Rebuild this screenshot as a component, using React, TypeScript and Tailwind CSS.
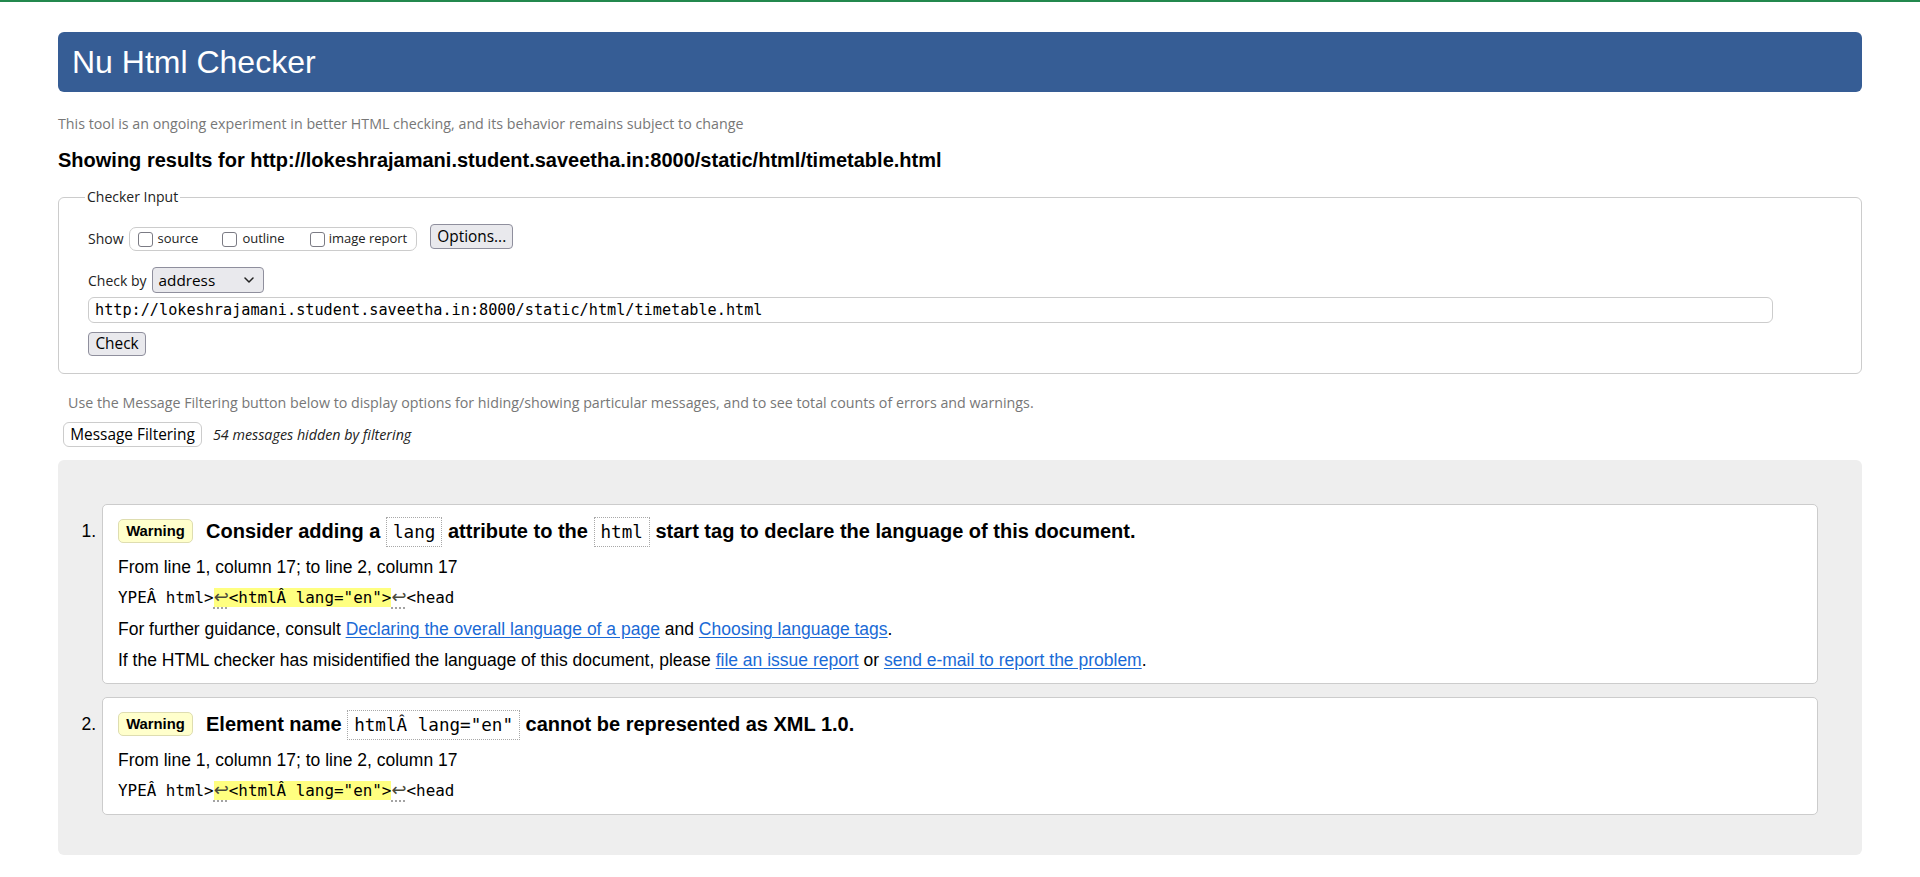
import React from "react";

const sans = "font-['Open_Sans',sans-serif]";
const arial = "font-['Liberation_Sans',Arial,sans-serif]";
const mono = "font-['DejaVu_Sans_Mono',monospace]";

function Box({ children }: { children: React.ReactNode }) {
  return (
    <span className="inline-block w-[15px] h-[15px] border-[1.5px] border-[#7b7b84] rounded-[3px] bg-white shrink-0" />
  );
}

function Ret() {
  return (
    <span className="font-['DejaVu_Sans',sans-serif] text-[18px] leading-[18px] text-[#4a4a3a] underline decoration-dotted decoration-[#999] underline-offset-[5px]">
      ↩
    </span>
  );
}

function CodeLine() {
  return (
    <div className={`mt-[7px] h-[24px] leading-[24px] text-[15.9px] whitespace-pre ${mono}`}>
      YPEÂ html&gt;
      <span className="bg-[#ffff80]">
        <Ret />
        &lt;htmlÂ lang="en"&gt;
      </span>
      <Ret />
      &lt;head
    </div>
  );
}

function Chip({ children }: { children: React.ReactNode }) {
  return (
    <span
      className={`inline-block border border-dotted border-[#a8a8a8] px-[6px] leading-[28px] font-normal text-[17.6px] ${mono}`}
    >
      {children}
    </span>
  );
}

function Warning() {
  return (
    <span
      className={`flex items-center justify-center w-[75px] h-[24px] rounded-[5px] border border-[#deddb0] bg-[#ffffcc] text-[14.8px] font-bold shrink-0 ${arial}`}
    >
      Warning
    </span>
  );
}

function Item({ n, children }: { n: number; children: React.ReactNode }) {
  return (
    <div className="flex">
      <div className={`w-[30px] pr-[6px] pt-[10px] text-right text-[17.5px] leading-[34px] shrink-0 ${arial}`}>
        {n}.
      </div>
      <div className={`flex-1 bg-white border border-[#cccccc] rounded-[5px] pt-[9px] pl-[15px] pb-[11px] text-[17.5px] text-black ${arial}`}>
        {children}
      </div>
    </div>
  );
}

const link = "text-[#1a6ad6] underline underline-offset-[2px]";

export default function App() {
  return (
    <div className="min-h-[877px] bg-white border-t-2 border-[#23884e] px-[58px] pt-[30px] pb-[22px] text-black">
      <h1
        className={`h-[60px] rounded-[6px] bg-[#365d95] text-white text-[32px] leading-[60px] pl-[14px] font-normal ${arial}`}
      >
        Nu Html Checker
      </h1>
      <p className={`mt-[23px] text-[14.25px] leading-[18px] text-[#777777] ${sans}`}>
        This tool is an ongoing experiment in better HTML checking, and its behavior remains subject to change
      </p>
      <h2 className={`mt-[15px] text-[20px] leading-[24px] font-bold ${arial}`}>
        Showing results for http://lokeshrajamani.student.saveetha.in:8000/static/html/timetable.html
      </h2>

      <fieldset className={`mt-[15px] border border-[#cccccc] rounded-[6px] px-[29px] pt-[17px] pb-[17px] ${sans}`}>
        <legend className="-ml-[3px] px-[2px] text-[14px] leading-[20px] text-[#222]">Checker Input</legend>

        <div className="flex items-start h-[27px]">
          <span className="mt-[3px] text-[14px] leading-[24px] text-[#222]">Show</span>
          <div className="ml-[5px] mt-[3px] h-[24px] flex items-center border border-[#cccccc] rounded-[7px] pl-[8px] pr-[9px] text-[13px] text-[#222]">
            <label className="flex items-center">
              <Box>{null}</Box>
              <span className="ml-[5px]">source</span>
            </label>
            <label className="flex items-center ml-[24px]">
              <Box>{null}</Box>
              <span className="ml-[5px]">outline</span>
            </label>
            <label className="flex items-center ml-[25px]">
              <Box>{null}</Box>
              <span className="ml-[4px]">image report</span>
            </label>
          </div>
          <button className="ml-[13px] w-[83px] h-[25px] bg-[#e9e9ed] border border-[#8f8f9d] rounded-[4px] text-[15.4px] leading-[22px] text-black">
            Options...
          </button>
        </div>

        <div className="mt-[16px] flex items-center h-[26px]">
          <span className="text-[14px] text-[#222]">Check by</span>
          <div className="ml-[5px] w-[112px] h-[26px] bg-[#e9e9ed] border border-[#8f8f9d] rounded-[4px] flex items-center justify-between pl-[6px] pr-[9px]">
            <span className="text-[15.3px] leading-[22px] text-black">address</span>
            <svg width="10" height="6" viewBox="0 0 10 6" fill="none">
              <path d="M1 1l4 4 4-4" stroke="#222" strokeWidth="1.5" strokeLinecap="round" strokeLinejoin="round" />
            </svg>
          </div>
        </div>

        <div
          className={`mt-[4px] w-[1685px] h-[26px] border border-[#cccccc] rounded-[6px] pl-[6px] flex items-center text-[15.2px] text-black ${mono}`}
        >
          http://lokeshrajamani.student.saveetha.in:8000/static/html/timetable.html
        </div>

        <button className="mt-[9px] w-[58px] h-[24px] bg-[#e9e9ed] border border-[#8f8f9d] rounded-[4px] text-[15.4px] leading-[22px] text-black">
          Check
        </button>
      </fieldset>

      <p className={`mt-[20px] ml-[10px] text-[14.25px] leading-[18px] text-[#777777] ${sans}`}>
        Use the Message Filtering button below to display options for hiding/showing particular messages, and to see total
        counts of errors and warnings.
      </p>

      <div className={`mt-[10px] flex items-center ${sans}`}>
        <button className="ml-[5px] w-[139px] h-[25px] bg-white border border-[#cccccc] rounded-[6px] text-[15.4px] leading-[22px] text-black">
          Message Filtering
        </button>
        <span className="ml-[11px] text-[14.3px] italic text-[#222]">54 messages hidden by filtering</span>
      </div>

      <div className="mt-[13px] bg-[#eeeeee] rounded-[6px] pt-[44px] pb-[40px] pl-[14px] pr-[44px] flex flex-col gap-[13px]">
        <Item n={1}>
          <div className="flex items-center h-[34px]">
            <Warning />
            <span className="ml-[13px] text-[20px] font-bold leading-[34px] whitespace-nowrap">
              Consider adding a <Chip>lang</Chip> attribute to the <Chip>html</Chip> start tag to declare the language of
              this document.
            </span>
          </div>
          <div className="mt-[7px] leading-[24px]">From line 1, column 17; to line 2, column 17</div>
          <CodeLine />
          <div className="mt-[7px] leading-[24px]">
            For further guidance, consult <a className={link}>Declaring the overall language of a page</a> and{" "}
            <a className={link}>Choosing language tags</a>.
          </div>
          <div className="mt-[7px] leading-[24px]">
            If the HTML checker has misidentified the language of this document, please{" "}
            <a className={link}>file an issue report</a> or <a className={link}>send e-mail to report the problem</a>.
          </div>
        </Item>
        <Item n={2}>
          <div className="flex items-center h-[34px]">
            <Warning />
            <span className="ml-[13px] text-[20px] font-bold leading-[34px] whitespace-nowrap">
              Element name <Chip>htmlÂ lang="en"</Chip> cannot be represented as XML 1.0.
            </span>
          </div>
          <div className="mt-[7px] leading-[24px]">From line 1, column 17; to line 2, column 17</div>
          <CodeLine />
        </Item>
      </div>
    </div>
  );
}
